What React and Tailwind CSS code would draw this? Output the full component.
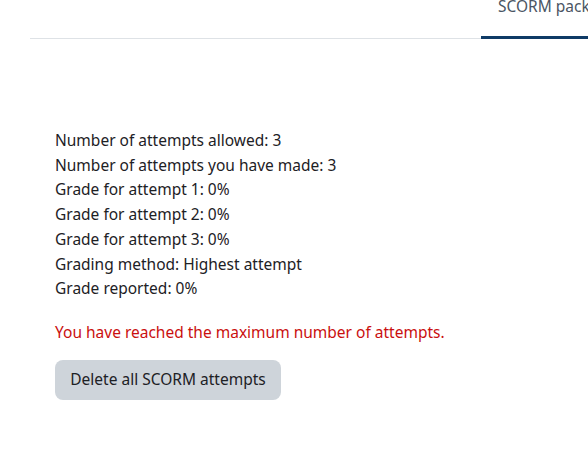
import React from "react";

const lines = [
  "Number of attempts allowed: 3",
  "Number of attempts you have made: 3",
  "Grade for attempt 1: 0%",
  "Grade for attempt 2: 0%",
  "Grade for attempt 3: 0%",
  "Grading method: Highest attempt",
  "Grade reported: 0%",
];

const App = () => {
  return (
    <div className="w-[588px] h-[470px] bg-white overflow-hidden text-[#1d2125]" style={{ fontFamily: '"Noto Sans", "Open Sans", sans-serif' }}>
      <div className="ml-[30px] h-[39px] border-b border-[#dee2e6] flex justify-end items-end">
        <div className="w-[107px] -mb-px border-b-[3px] border-[#0f3b66] pl-[17px] pb-[18px] text-[15.5px] leading-[24px] text-[#4b5563] whitespace-nowrap overflow-hidden">
          SCORM package
        </div>
      </div>
      <div className="pl-[55px] pt-[89px]">
        <div className="text-[15.5px] leading-[24.7px]">
          {lines.map((l) => (
            <div key={l}>{l}</div>
          ))}
        </div>
        <p className="mt-[19px] text-[15.5px] leading-[24px] text-[#ca0f0f]">
          You have reached the maximum number of attempts.
        </p>
        <button className="mt-[16px] h-[40px] w-[226px] rounded-lg bg-[#ced4da] text-[15.5px] text-[#1d2125]">
          Delete all SCORM attempts
        </button>
      </div>
    </div>
  );
};

export default App;
